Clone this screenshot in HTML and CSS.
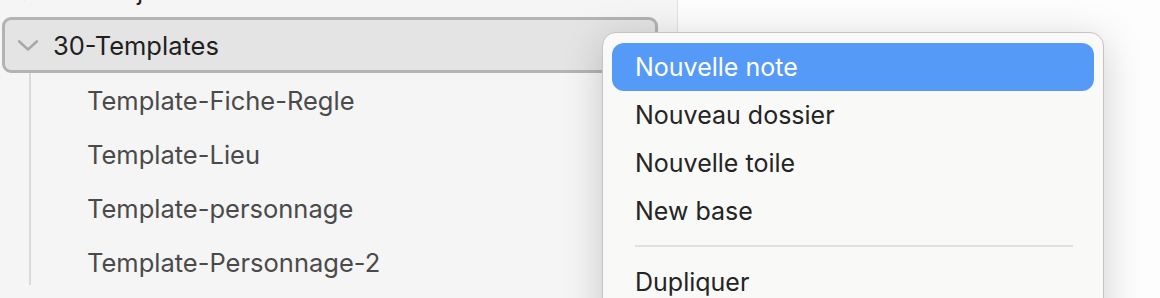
FILE: index.html
```html
<!DOCTYPE html>
<html lang="fr">
<head>
    <meta charset="UTF-8">
    <meta name="viewport" content="width=device-width, initial-scale=1.0">
    <title>Explorateur de fichiers</title>
    <link rel="stylesheet" href="styles.css">
</head>
<body>
    <div class="app">
        <!-- Arborescence des dossiers -->
        <nav class="sidebar">
            <div class="tree">
                <div class="row folder">
                    <svg class="chevron" viewBox="0 0 16 16"><path d="M5.5 2 L11 8 L5.5 14"/></svg>
                    <span>20-Projets</span>
                </div>
                <div class="row folder selected">
                    <svg class="chevron" viewBox="0 0 16 16"><path d="M2 5.5 L8 11 L14 5.5"/></svg>
                    <span>30-Templates</span>
                </div>
                <div class="children">
                    <div class="row file">Template-Fiche-Regle</div>
                    <div class="row file">Template-Lieu</div>
                    <div class="row file">Template-personnage</div>
                    <div class="row file">Template-Personnage-2</div>
                </div>
            </div>
        </nav>
        <main class="content"></main>
    </div>

    <!-- Menu contextuel -->
    <div class="context-menu">
        <div class="menu-item active">Nouvelle note</div>
        <div class="menu-item">Nouveau dossier</div>
        <div class="menu-item">Nouvelle toile</div>
        <div class="menu-item">New base</div>
        <div class="separator"></div>
        <div class="menu-item">Dupliquer</div>
    </div>
</body>
</html>
```

FILE: styles.css
```css
body {
    margin: 0;
    height: 298px;
    overflow: hidden;
    font-family: Inter, "Noto Sans", sans-serif;
    background-color: #fdfdfd;
}

.app {
    display: flex;
    height: 100%;
}

.sidebar {
    width: 677px;
    flex-shrink: 0;
    background-color: #f5f5f5;
    border-right: 1px solid #e3e3e3;
    overflow: hidden;
}

.content {
    flex: 1;
    background-color: #fdfdfd;
}

.tree {
    margin-top: -37px;
    padding-left: 2px;
    width: 656px;
}

.row {
    display: flex;
    align-items: center;
    height: 54px;
    box-sizing: border-box;
    font-size: 25.5px;
    white-space: nowrap;
}

.folder {
    color: #1f1f1f;
    padding-left: 14px;
}

.folder span {
    margin-left: 13px;
}

.chevron {
    width: 24px;
    height: 24px;
    fill: none;
    stroke: #a8a8a8;
    stroke-width: 1.6;
    stroke-linecap: round;
    stroke-linejoin: round;
}

.selected {
    height: 56px;
    padding-left: 11px;
    background-color: #e4e4e4;
    border: 3px solid #b3b3b3;
    border-radius: 9px;
}

.children {
    margin-left: 27px;
    border-left: 2px solid #dadada;
    height: 212px;
}

.file {
    color: #4a4a4a;
    padding-left: 56px;
}

.context-menu {
    position: absolute;
    left: 602px;
    top: 32px;
    width: 482px;
    height: 290px;
    padding: 10px 9px;
    background-color: #f9f9f8;
    border: 1px solid #c4c4c4;
    border-radius: 14px;
    box-shadow: 0 8px 40px rgba(0, 0, 0, 0.18);
}

.menu-item {
    height: 48px;
    display: flex;
    align-items: center;
    padding-left: 23px;
    border-radius: 12px;
    font-size: 25px;
    color: #242424;
}

.menu-item.active {
    background-color: #559af7;
    color: white;
}

.separator {
    height: 2px;
    margin: 10px 21px 11px 23px;
    background-color: #e1e1e1;
}
```
